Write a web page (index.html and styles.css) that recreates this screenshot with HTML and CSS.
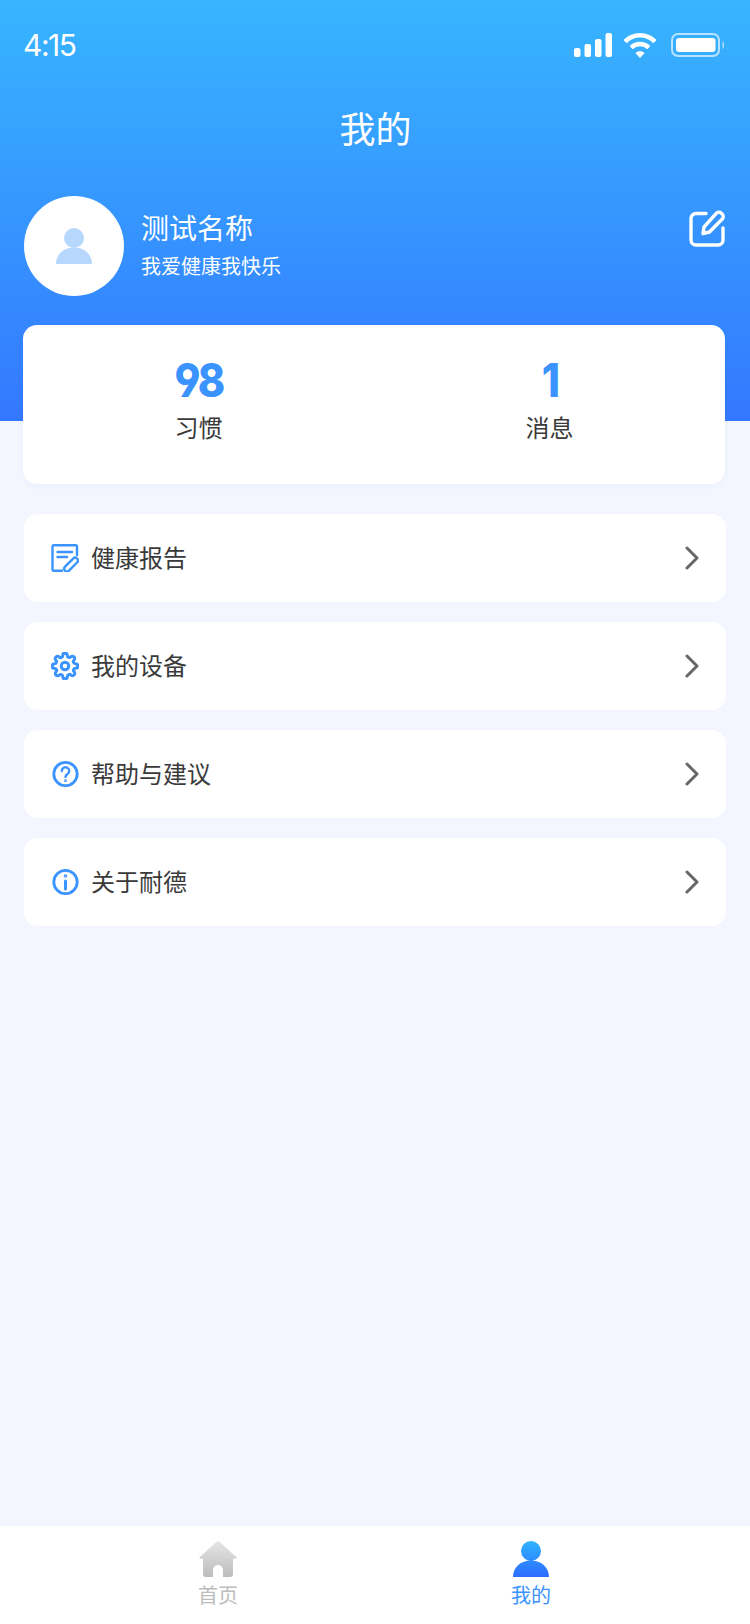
FILE: index.html
```html
<!DOCTYPE html>
<html lang="zh-CN">
<head>
    <meta charset="UTF-8">
    <meta name="viewport" content="width=device-width, initial-scale=1.0">
    <title>我的</title>
    <link rel="stylesheet" href="styles.css">
</head>
<body>
    <div class="page">
        <header class="header">
            <div class="status-bar">
                <span class="clock">4:15</span>
                <div class="status-icons">
                    <svg class="signal" width="38" height="24" viewBox="0 0 38 24" fill="#fff">
                        <rect x="0" y="15" width="6.5" height="9" rx="2"/>
                        <rect x="10.5" y="11" width="6.5" height="13" rx="2"/>
                        <rect x="21" y="6" width="6.5" height="18" rx="2"/>
                        <rect x="31.5" y="0" width="6.5" height="24" rx="2"/>
                    </svg>
                    <svg class="wifi" width="34" height="26" viewBox="0 0 34 26" fill="none" stroke="#fff" stroke-width="4.4">
                        <path d="M2 9.6C10.4 1.2 23.6 1.2 32 9.6"/>
                        <path d="M8.2 15.6C13.2 10.8 20.8 10.8 25.8 15.6"/>
                        <path d="M12.4 21 L17 26 L21.6 21 C19 18.6 15 18.6 12.4 21Z" fill="#fff" stroke="none"/>
                    </svg>
                    <svg class="battery" width="54" height="24" viewBox="0 0 54 24">
                        <rect x="1" y="1" width="47" height="22" rx="6" fill="none" stroke="#fff" stroke-opacity="0.65" stroke-width="2"/>
                        <rect x="5" y="5" width="39.500" height="14" rx="3" fill="#fff"/>
                        <path d="M51.500 8C53.500 9 53.500 15 51.500 16Z" fill="#fff" fill-opacity="0.65"/>
                    </svg>
                </div>
            </div>
            <h1 class="page-title">我的</h1>
            <div class="profile">
                <div class="avatar">
                    <svg width="36" height="36" viewBox="0 0 36 36" fill="#b7d7fd">
                        <ellipse cx="18" cy="10" rx="10" ry="10"/>
                        <path d="M0 36C0 26 8 19.500 18 19.500S36 26 36 36Z"/>
                    </svg>
                </div>
                <div class="profile-text">
                    <div class="profile-name">测试名称</div>
                    <div class="profile-motto">我爱健康我快乐</div>
                </div>
                <svg class="edit-icon" width="36" height="37" viewBox="0 0 36 37" fill="none" stroke="#fff" stroke-width="3.400" stroke-linecap="round" stroke-linejoin="round">
                    <path d="M17 3.500H7A5 5 0 0 0 2 8.500V30A5 5 0 0 0 7 35H29A5 5 0 0 0 34 30V18"/>
                    <path d="M27.500 3.200a3.400 3.400 0 0 1 4.800 0l1 1a3.400 3.400 0 0 1 0 4.800L20.500 22 14 23.500 15 17Z"/>
                </svg>
            </div>
        </header>

        <main class="content">
            <section class="stats">
                <div class="stat">
                    <div class="stat-num">98</div>
                    <div class="stat-label">习惯</div>
                </div>
                <div class="stat">
                    <div class="stat-num">1</div>
                    <div class="stat-label">消息</div>
                </div>
            </section>

            <div class="menu">
                <div class="menu-row">
                    <svg class="menu-icon" width="28" height="28" viewBox="0 0 28 28" fill="none" stroke="#3b93ff" stroke-width="2.400" stroke-linecap="round" stroke-linejoin="round">
                        <path d="M11 26.800H2.800A1.300 1.300 0 0 1 1.500 25.500V2.500A1.300 1.300 0 0 1 2.800 1.200H24.700A1.300 1.300 0 0 1 26 2.500V11"/>
                        <path d="M6.500 8H21M6.500 13H16"/>
                        <rect x="11.500" y="17.800" width="17" height="5.600" rx="2.800" transform="rotate(-45 20 20.500)"/>
                    </svg>
                    <span class="menu-label">健康报告</span>
                    <svg class="chevron" width="14" height="24" viewBox="0 0 14 24" fill="none" stroke="#666" stroke-width="3" stroke-linecap="round" stroke-linejoin="round"><path d="M2 2L12 12L2 22"/></svg>
                </div>
                <div class="menu-row">
                    <svg class="menu-icon" width="28" height="28" viewBox="0 0 24 24" fill="none" stroke="#3b93ff" stroke-width="2.600" stroke-linecap="round" stroke-linejoin="round">
                        <circle cx="12" cy="12" r="3.200"/>
                        <path d="M19.400 15a1.650 1.650 0 0 0 .33 1.820l.06.06a2 2 0 0 1 0 2.830 2 2 0 0 1-2.830 0l-.06-.06a1.650 1.650 0 0 0-1.820-.33 1.650 1.650 0 0 0-1 1.510V21a2 2 0 0 1-2 2 2 2 0 0 1-2-2v-.09A1.650 1.650 0 0 0 9 19.400a1.650 1.650 0 0 0-1.820.33l-.06.06a2 2 0 0 1-2.830 0 2 2 0 0 1 0-2.830l.06-.06a1.650 1.650 0 0 0 .33-1.820 1.650 1.650 0 0 0-1.510-1H3a2 2 0 0 1-2-2 2 2 0 0 1 2-2h.09A1.650 1.650 0 0 0 4.600 9a1.650 1.650 0 0 0-.33-1.820l-.06-.06a2 2 0 0 1 0-2.830 2 2 0 0 1 2.830 0l.06.06a1.650 1.650 0 0 0 1.820.33H9a1.650 1.650 0 0 0 1-1.510V3a2 2 0 0 1 2-2 2 2 0 0 1 2 2v.09a1.650 1.650 0 0 0 1 1.510 1.650 1.650 0 0 0 1.820-.33l.06-.06a2 2 0 0 1 2.830 0 2 2 0 0 1 0 2.830l-.06.06a1.650 1.650 0 0 0-.33 1.820V9a1.650 1.650 0 0 0 1.510 1H21a2 2 0 0 1 2 2 2 2 0 0 1-2 2h-.09a1.650 1.650 0 0 0-1.510 1z"/>
                    </svg>
                    <span class="menu-label">我的设备</span>
                    <svg class="chevron" width="14" height="24" viewBox="0 0 14 24" fill="none" stroke="#666" stroke-width="3" stroke-linecap="round" stroke-linejoin="round"><path d="M2 2L12 12L2 22"/></svg>
                </div>
                <div class="menu-row">
                    <svg class="menu-icon" width="28" height="28" viewBox="0 0 28 28" fill="none" stroke="#3b93ff" stroke-width="2.800" stroke-linecap="round" stroke-linejoin="round">
                        <circle cx="14.500" cy="14" r="11.700"/>
                        <path d="M10.800 11a3.700 3.700 0 1 1 5.700 3.100c-1.300.8-2 1.500-2 2.800" stroke-width="2.400"/>
                        <circle cx="14.500" cy="20.700" r="0.500" stroke-width="1.800"/>
                    </svg>
                    <span class="menu-label">帮助与建议</span>
                    <svg class="chevron" width="14" height="24" viewBox="0 0 14 24" fill="none" stroke="#666" stroke-width="3" stroke-linecap="round" stroke-linejoin="round"><path d="M2 2L12 12L2 22"/></svg>
                </div>
                <div class="menu-row">
                    <svg class="menu-icon" width="28" height="28" viewBox="0 0 28 28" fill="none" stroke="#3b93ff" stroke-width="2.800" stroke-linecap="round">
                        <circle cx="14.500" cy="14" r="11.700"/>
                        <path d="M14.500 13V21" stroke-width="3"/>
                        <circle cx="14.500" cy="8" r="0.600" stroke-width="2.400"/>
                    </svg>
                    <span class="menu-label">关于耐德</span>
                    <svg class="chevron" width="14" height="24" viewBox="0 0 14 24" fill="none" stroke="#666" stroke-width="3" stroke-linecap="round" stroke-linejoin="round"><path d="M2 2L12 12L2 22"/></svg>
                </div>
            </div>
        </main>

        <nav class="tabbar">
            <div class="tab tab-home">
                <svg width="38" height="36" viewBox="0 0 38 36">
                    <defs>
                        <linearGradient id="homeFill" x1="0" y1="0" x2="0" y2="1">
                            <stop offset="0" stop-color="#e6e6e6"/>
                            <stop offset="1" stop-color="#bcbcbc"/>
                        </linearGradient>
                    </defs>
                    <path fill="url(#homeFill)" d="M17.500 .8a2.400 2.400 0 0 1 3 0L37.200 16a1 1 0 0 1-.7 1.700H34V33a3 3 0 0 1-3 3H24V29a5 5 0 0 0-10 0V36H7a3 3 0 0 1-3-3V17.700H1.500A1 1 0 0 1 .8 16Z"/>
                </svg>
                <span class="tab-label">首页</span>
            </div>
            <div class="tab tab-mine">
                <svg width="36" height="36" viewBox="0 0 36 36">
                    <defs>
                        <linearGradient id="userFill" x1="0" y1="0" x2="0" y2="1">
                            <stop offset="0" stop-color="#2fb2ff"/>
                            <stop offset="1" stop-color="#2d6cff"/>
                        </linearGradient>
                    </defs>
                    <path fill="url(#userFill)" d="M18 0a10 10 0 1 1 0 20a10 10 0 1 1 0-20ZM0 36C0 26 8 19.500 18 19.500S36 26 36 36Z"/>
                </svg>
                <span class="tab-label">我的</span>
            </div>
        </nav>
    </div>
</body>
</html>
```

FILE: styles.css
```css
* {
    box-sizing: border-box;
}
body {
    margin: 0;
    background-color: #f3f6ff;
    font-family: "Noto Sans CJK SC", "Noto Sans", sans-serif;
    color: #3a3a3a;
}
.page {
    display: flex;
    flex-direction: column;
    height: 1624px;
}
.header {
    height: 421px;
    padding: 0 25px 0 24px;
    background: linear-gradient(180deg, #37b5ff 0%, #3478ff 100%);
    color: white;
}
.status-bar {
    display: flex;
    align-items: center;
    justify-content: space-between;
    height: 90px;
}
.clock {
    font-family: Inter, sans-serif;
    font-size: 30px;
    letter-spacing: -1.5px;
    margin-left: -1px;
}
.status-icons {
    display: flex;
    align-items: center;
    gap: 14px;
}
.status-icons .wifi {
    margin-left: -3px;
}
.page-title {
    margin: 0;
    height: 106px;
    padding: 12px 0 0 2px;
    font-size: 36px;
    font-weight: 400;
    line-height: 50px;
    text-align: center;
}
.profile {
    display: flex;
    align-items: flex-start;
}
.avatar {
    display: flex;
    align-items: center;
    justify-content: center;
    width: 100px;
    height: 100px;
    border-radius: 50%;
    background-color: white;
}
.profile-text {
    flex: 1;
    margin-left: 17px;
    padding-top: 11px;
}
.profile-name {
    font-size: 28px;
    line-height: 40px;
}
.profile-motto {
    margin-top: 4px;
    font-size: 20px;
    line-height: 30px;
}
.edit-icon {
    margin-top: 14px;
}
.content {
    flex: 1;
    padding: 0 25px 0 23px;
}
.stats {
    display: flex;
    height: 159px;
    margin-top: -96px;
    padding-top: 30px;
    border-radius: 14px;
    background-color: white;
    box-shadow: 0 2px 6px rgba(50,100,220,0.04);
    position: relative;
}
.stat {
    flex: 1;
    text-align: center;
}
.stat-num {
    font-family: Inter, sans-serif;
    font-feature-settings: "cv04";
    font-size: 47px;
    font-weight: 800;
    line-height: 50px;
    letter-spacing: -3px;
    color: #3b93ff;
    transform: scaleX(0.88);
}
.stat-label {
    margin-top: 5px;
    font-size: 24px;
    line-height: 34px;
}
.menu {
    display: flex;
    flex-direction: column;
    gap: 20px;
    margin: 30px -1px 0 1px;
}
.menu-row {
    display: flex;
    align-items: center;
    height: 88px;
    padding: 0 27px 0 27px;
    border-radius: 14px;
    background-color: white;
}
.menu-label {
    flex: 1;
    margin-left: 12px;
    padding-bottom: 4px;
    font-size: 24px;
}
.tabbar {
    display: flex;
    height: 98px;
    padding-top: 15px;
    background-color: white;
}
.tab {
    flex: 0 0 50%;
    display: flex;
    flex-direction: column;
    align-items: center;
    color: #bdbdbd;
}
.tab-home {
    padding-left: 61px;
}
.tab-mine {
    padding-right: 63px;
    color: #3b93ff;
}
.tab-label {
    font-size: 20px;
    line-height: 30px;
    margin-top: 3px;
}
```
